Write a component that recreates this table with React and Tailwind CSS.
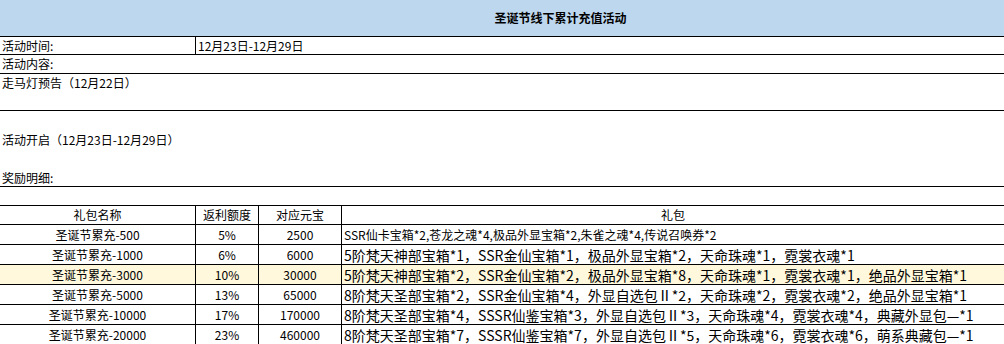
import React from 'react';

const rows = [
  { name: '圣诞节累充-500', rate: '5%', amount: '2500', gift: 'SSR仙卡宝箱*2,苍龙之魂*4,极品外显宝箱*2,朱雀之魂*4,传说召唤券*2', small: true },
  { name: '圣诞节累充-1000', rate: '6%', amount: '6000', gift: '5阶梵天神部宝箱*1，SSR金仙宝箱*1，极品外显宝箱*2，天命珠魂*1，霓裳衣魂*1' },
  { name: '圣诞节累充-3000', rate: '10%', amount: '30000', gift: '5阶梵天神部宝箱*2，SSR金仙宝箱*2，极品外显宝箱*8，天命珠魂*1，霓裳衣魂*1，绝品外显宝箱*1', highlight: true },
  { name: '圣诞节累充-5000', rate: '13%', amount: '65000', gift: '8阶梵天圣部宝箱*2，SSR金仙宝箱*4，外显自选包Ⅱ*2，天命珠魂*2，霓裳衣魂*2，绝品外显宝箱*1' },
  { name: '圣诞节累充-10000', rate: '17%', amount: '170000', gift: '8阶梵天圣部宝箱*4，SSSR仙鉴宝箱*3，外显自选包Ⅱ*3，天命珠魂*4，霓裳衣魂*4，典藏外显包—*1' },
  { name: '圣诞节累充-20000', rate: '23%', amount: '460000', gift: '8阶梵天圣部宝箱*7，SSSR仙鉴宝箱*7，外显自选包Ⅱ*5，天命珠魂*6，霓裳衣魂*6，萌系典藏包—*1' },
];

const App = () => {
  return (
    <div className="w-[1004px] h-[344px] bg-white text-black text-[12px] leading-[16px] overflow-hidden font-['Noto_Sans_CJK_SC',sans-serif]">
      {/* Title band */}
      <div className="h-[37px] bg-[#bdd7ee] border-b border-black flex items-center justify-center pl-[117px]">
        <span className="font-bold">圣诞节线下累计充值活动</span>
      </div>

      {/* Activity info */}
      <div className="h-[18px] border-b border-black flex">
        <div className="w-[196px] border-r border-black flex items-center pl-[2px]">活动时间:</div>
        <div className="flex items-center pl-[2px]">12月23日-12月29日</div>
      </div>
      <div className="h-[19px] border-b border-black flex items-center pl-[2px]">活动内容:</div>
      <div className="h-[37px] border-b border-black pl-[2px] pt-[1px]">走马灯预告（12月22日）</div>
      <div className="h-[76px] border-b border-black pl-[2px] pt-[21px]">
        <div>活动开启（12月23日-12月29日）</div>
        <div className="mt-[22px]">奖励明细:</div>
      </div>
      <div className="h-[19px] border-b border-black"></div>

      {/* Reward table */}
      <div className="h-[19px] border-b border-black flex">
        <div className="w-[196px] border-r border-black flex items-center justify-center">礼包名称</div>
        <div className="w-[63px] border-r border-black flex items-center justify-center">返利额度</div>
        <div className="w-[83px] border-r border-black flex items-center justify-center">对应元宝</div>
        <div className="flex-1 flex items-center justify-center">礼包</div>
      </div>
      {rows.map((r) => (
        <div key={r.name} className={`h-[20px] border-b border-black flex ${r.highlight ? 'bg-[#fff8dc]' : ''}`}>
          <div className="w-[196px] border-r border-black flex items-center justify-center">{r.name}</div>
          <div className="w-[63px] border-r border-black flex items-center justify-center">{r.rate}</div>
          <div className="w-[83px] border-r border-black flex items-center justify-center">{r.amount}</div>
          <div className={`flex-1 flex items-center pl-[2px] whitespace-nowrap ${r.small ? 'text-[12px]' : 'text-[14px]'}`}>{r.gift}</div>
        </div>
      ))}
    </div>
  );
};

export default App;
